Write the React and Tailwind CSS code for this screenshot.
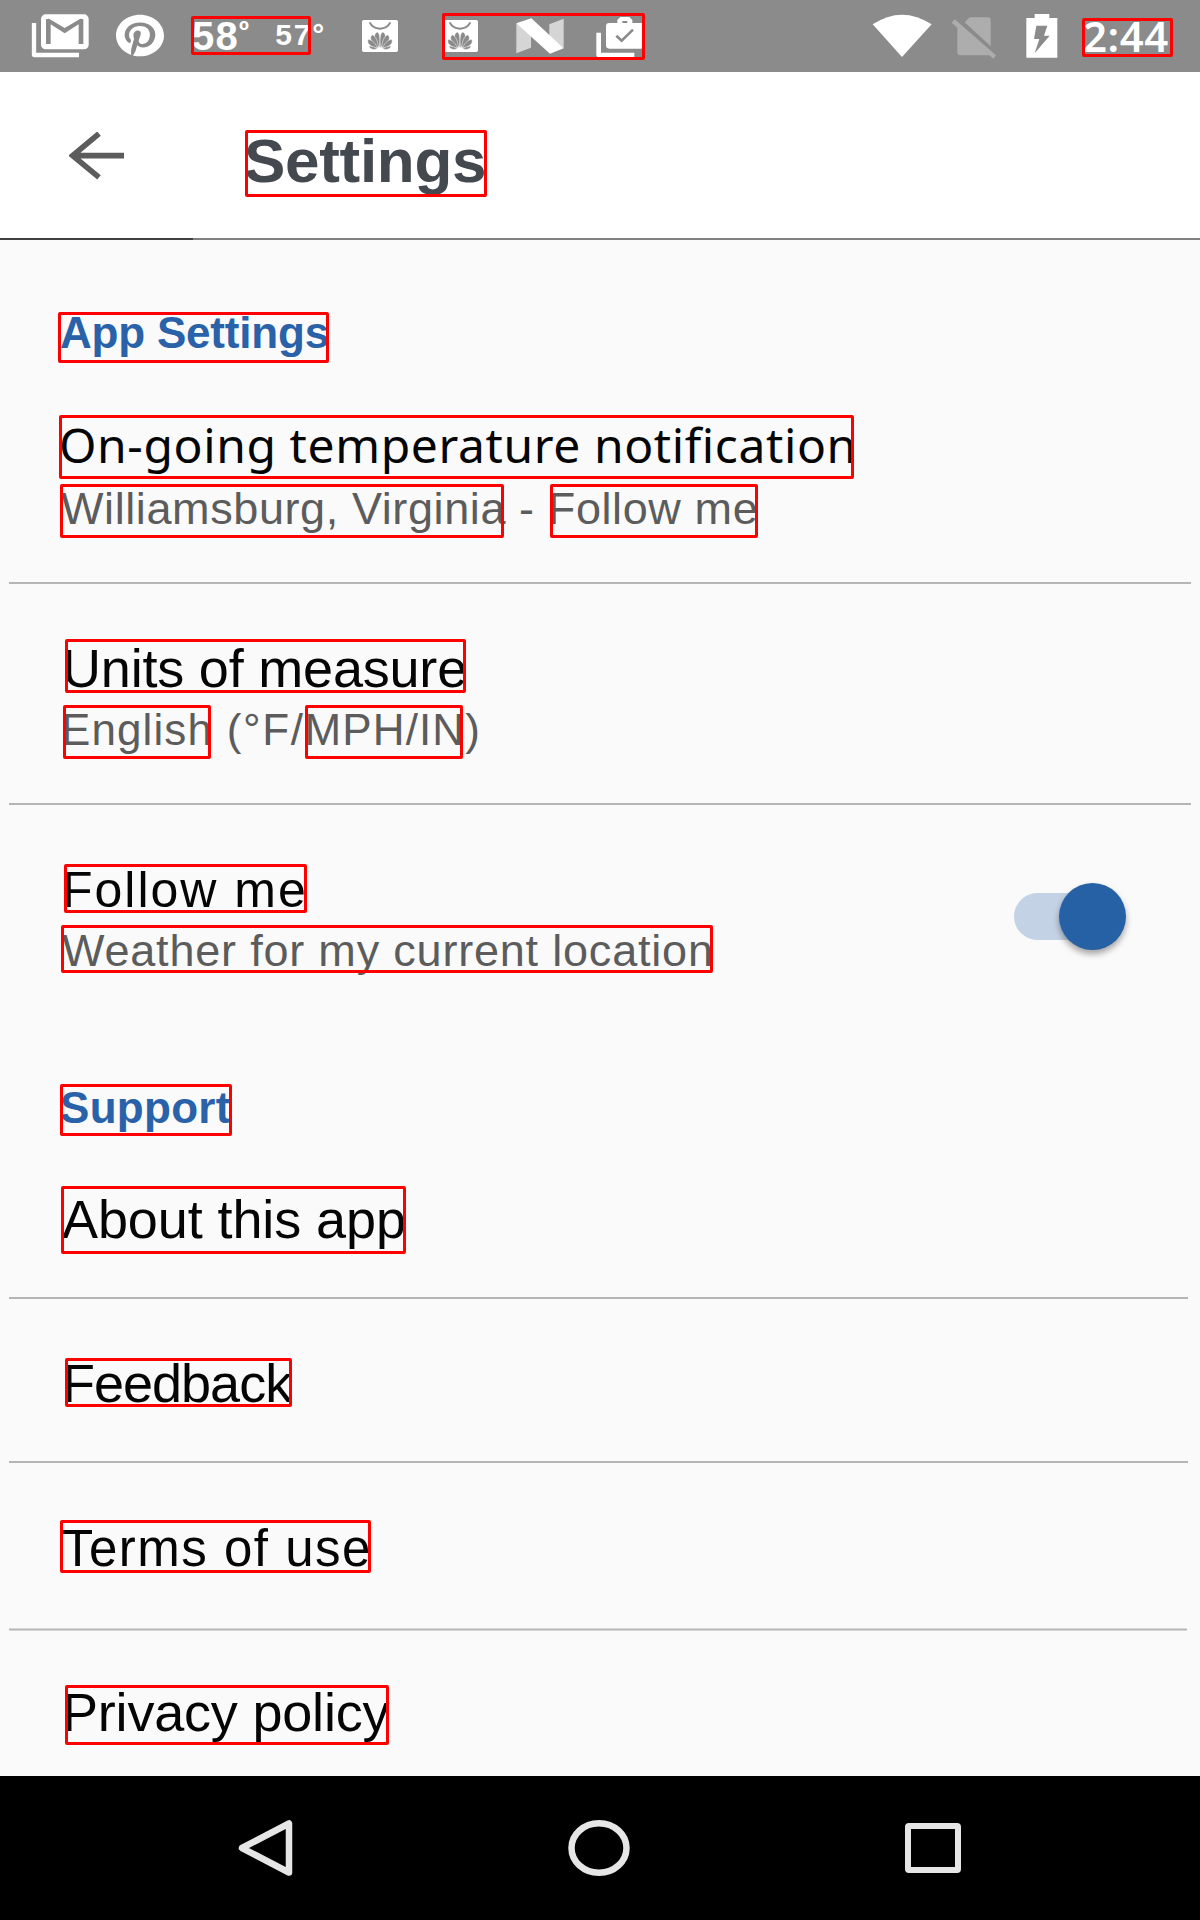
import React from "react";
import { FaPinterest } from "react-icons/fa";

/* Text run with a red outline lying over it */
function Mark({ box, children }) {
  return (
    <span className="relative inline-block">
      {children}
      <span className={`absolute rounded-[2px] border-[3px] border-[#fe0000] ${box}`} />
    </span>
  );
}

function Line({ className, children }) {
  return <p className={`w-fit whitespace-pre ${className}`}>{children}</p>;
}

function Divider({ className = "mr-[9px] h-[2px] bg-[#b5b5b5]" }) {
  return <div className={`ml-[9px] shrink-0 ${className}`} />;
}

function GmailIcon() {
  return (
    <svg className="ml-[31px] h-[44px] w-[58px] shrink-0" viewBox="93 42 174 132">
      <path d="M102 69V165H237" fill="none" stroke="#fff" strokeWidth="13" strokeLinejoin="round" />
      <rect x="123" y="43" width="143" height="105" rx="14" fill="#fff" />
      <path d="M138 58L147 56L194 84L241 56L250 58V132H236V73L194 100L152 73V132H138Z" fill="#8b8b8b" />
    </svg>
  );
}

function BagIcon({ className }) {
  return (
    <svg className={`h-[32px] w-[36px] shrink-0 ${className}`} viewBox="66 60 108 96">
      <rect x="66" y="60" width="108" height="96" rx="6" fill="#fff" />
      <path d="M89 67Q98 85 120 86Q142 85 151 67" fill="none" stroke="#8b8b8b" strokeWidth="6" />
      <g fill="#8b8b8b" stroke="#fff" strokeWidth="1.5">
        <path d="M119 144C103 128 97 101 112 96C122 101 120 124 119 144Z" />
        <path d="M121 144C137 128 143 101 128 96C118 101 120 124 121 144Z" />
        <path d="M116 144C95 133 86 114 96 104C109 108 113 126 116 144Z" />
        <path d="M124 144C145 133 154 114 144 104C131 108 127 126 124 144Z" />
        <path d="M113 145C91 141 80 131 84 118C99 120 107 131 113 145Z" />
        <path d="M127 145C149 141 160 131 156 118C141 120 133 131 127 145Z" />
        <path d="M112 146C103 150 90 149 86 138C97 139 105 141 112 146Z" />
        <path d="M128 146C137 150 150 149 154 138C143 139 135 141 128 146Z" />
      </g>
    </svg>
  );
}

function NougatIcon() {
  return (
    <svg className="ml-[38px] h-[36px] w-[48px] shrink-0" viewBox="528 54 144 108">
      <path d="M529 70L573 100V143L529 160Z" fill="#d5d5d5" />
      <path d="M628 73L671 56V145L628 110Z" fill="#d5d5d5" />
      <path d="M529 70L574 55L671 145L630 161Z" fill="#fff" />
    </svg>
  );
}

function BriefcaseIcon() {
  return (
    <svg className="ml-[32px] h-[42px] w-[49px] shrink-0" viewBox="768 48 147 126">
      <path d="M776 98V165H883" fill="none" stroke="#fff" strokeWidth="14" strokeLinejoin="round" />
      <rect x="798" y="69" width="114" height="77" rx="10" fill="#fff" />
      <path d="M832 70V60L841 51H868L877 60V70H862V63H847V70Z" fill="#fff" />
      <path d="M829 107L845 122L879 89" fill="none" stroke="#8b8b8b" strokeWidth="8" />
    </svg>
  );
}

function WifiIcon() {
  return (
    <svg className="ml-auto h-[44px] w-[60px] shrink-0" viewBox="66 42 180 132">
      <path d="M68 73Q156 15 245 73L156 171Z" fill="#fff" />
    </svg>
  );
}

function NoSimIcon() {
  return (
    <svg className="ml-[19px] h-[42px] w-[46px] shrink-0" viewBox="303 50 138 126">
      <g fill="#adadad">
        <path d="M344 66L359 51H414Q422 51 422 59V138Z" />
        <path d="M322 76L418 165H332Q322 165 322 155Z" />
        <path d="M305 67L314 57L438 165L430 175Z" />
      </g>
    </svg>
  );
}

function BatteryIcon() {
  return (
    <svg className="ml-[29px] h-[44px] w-[32px] shrink-0" viewBox="527 42 96 132">
      <path d="M528 54H553V42H597V54H621V173H528Z" fill="#fff" />
      <path d="M558 77H591L581 107H598L553 160L567 117H551Z" fill="#8b8b8b" />
    </svg>
  );
}

function StatusBar() {
  return (
    <div className="flex h-[72px] shrink-0 items-start bg-[#8b8b8b] pt-[14px] text-white">
      <GmailIcon />
      <FaPinterest className="ml-[27px] h-[43px] w-[48px] shrink-0" preserveAspectRatio="none" />
      <div className="relative ml-[28px] flex h-[40px] w-[134px] shrink-0 whitespace-pre font-bold">
        <span className="mt-[2px] text-[40px] leading-[40px] tracking-[1.3px]">58</span>
        <span className="mt-[4px] text-[27px] leading-[27px]">º</span>
        <span className="ml-auto mt-[6px] text-[30px] leading-[30px] tracking-[1.8px]">57°</span>
        <span className="absolute -left-px top-[2px] h-[39px] w-[120px] rounded-[2px] border-[3px] border-[#fe0000]" />
      </div>
      <BagIcon className="ml-[36px] mt-[6px]" />
      <div className="relative ml-[44px] flex w-[203px] shrink-0">
        <BagIcon className="mt-[6px]" />
        <div className="mt-[4px] flex">
          <NougatIcon />
        </div>
        <div className="mt-[2px] flex">
          <BriefcaseIcon />
        </div>
        <span className="absolute -top-px left-0 h-[47px] w-[203px] rounded-[2px] border-[3px] border-[#fe0000]" />
      </div>
      <WifiIcon />
      <div className="mt-[3px] flex">
        <NoSimIcon />
      </div>
      <BatteryIcon />
      <p className="ml-[25px] mr-[31px] mt-px font-['Noto_Sans',sans-serif] text-[42px] font-semibold leading-[42px] tracking-[0.6px]">
        <Mark box="-left-px top-[3px] h-[39px] w-[91px]">2:44</Mark>
      </p>
    </div>
  );
}

function Header() {
  return (
    <header className="flex h-[168px] shrink-0 flex-col bg-white">
      <div className="flex flex-1 items-start">
        <svg className="ml-[69px] mt-[60px] h-[48px] w-[56px] shrink-0" viewBox="207 96 168 144">
          <path d="M372 167H222M297 101L218 167L297 232" fill="none" stroke="#5c5c5c" strokeWidth="17" />
        </svg>
        <h1 className="ml-[119px] mt-[58px] text-[62px] font-bold leading-[62px] tracking-[-0.3px] text-[#444950]">
          <Mark box="left-px top-0 h-[67px] w-[242px]">Settings</Mark>
        </h1>
      </div>
      <div className="flex h-[2px] bg-[#808080]">
        <div className="w-[193px] bg-[#404040]" />
      </div>
    </header>
  );
}

function Toggle() {
  return (
    <div className="relative mr-[74px] mt-[18px] h-[67px] w-[112px]">
      <div className="absolute left-0 top-[10px] h-[47px] w-[99px] rounded-full bg-[#c4d2e5]" />
      <div className="absolute right-0 top-0 size-[67px] rounded-full bg-[#2660a5] shadow-[0_4px_6px_rgba(0,0,0,0.35)]" />
    </div>
  );
}

function NavBar() {
  return (
    <nav className="flex h-[144px] shrink-0 items-center bg-black">
      <svg className="ml-[236px] h-[60px] w-[60px]" viewBox="236 1818 60 60">
        <path d="M242 1848L289 1823.5V1872.5Z" fill="none" stroke="#e6e6e6" strokeWidth="6.5" strokeLinejoin="round" />
      </svg>
      <svg className="ml-[271px] h-[60px] w-[64px]" viewBox="567 1818 64 60">
        <ellipse cx="599" cy="1848" rx="27.5" ry="24.8" fill="none" stroke="#e6e6e6" strokeWidth="6.5" />
      </svg>
      <div className="ml-[274px] h-[50px] w-[56px] rounded-[4px] border-[6px] border-[#e6e6e6]" />
    </nav>
  );
}

export default function App() {
  return (
    <div className="flex h-[1920px] w-[1200px] flex-col overflow-hidden bg-[#fafafa] font-['Liberation_Sans',Arial,sans-serif] text-[#050505]">
      <StatusBar />
      <Header />

      <section className="h-[342px] shrink-0 pt-[71px]">
        <Line className="ml-[60px] text-[44px] font-bold leading-[44px] tracking-[-0.2px] text-[#2962a8]">
          <Mark box="-left-[2px] top-px h-[51px] w-[271px]">App Settings</Mark>
        </Line>
        <Line className="ml-[59px] mt-[65px] font-['Noto_Sans',sans-serif] text-[48px] leading-[50px] tracking-[0.6px]">
          <Mark box="left-0 -top-[5px] h-[64px] w-[795px]">On-going temperature notification</Mark>
        </Line>
        <Line className="ml-[61px] mt-[16px] text-[45px] leading-[46px] tracking-[0.6px] text-[#5c5c5c]">
          <Mark box="-left-px -top-[2px] h-[54px] w-[444px]">Williamsburg, Virginia</Mark>
          {" - "}
          <Mark box="left-[2px] -top-[2px] h-[54px] w-[208px]">Follow me</Mark>
        </Line>
      </section>
      <Divider />

      <section className="h-[219px] shrink-0 pt-[57px]">
        <Line className="ml-[62px] text-[54px] leading-[54px] tracking-[-0.2px]">
          <Mark box="left-[3px] -top-[2px] h-[54px] w-[401px]">Units of measure</Mark>
        </Line>
        <Line className="ml-[61px] mt-[13px] text-[44px] leading-[44px] tracking-[1.1px] text-[#5c5c5c]">
          <Mark box="left-[2px] -top-[3px] h-[54px] w-[148px]">English</Mark>
          <span className="tracking-[1.6px]">{" (°F/"}</span>
          <Mark box="left-0 -top-[3px] h-[54px] w-[158px]">MPH/IN</Mark>
          {")"}
        </Line>
      </section>
      <Divider />

      <section className="h-[492px] shrink-0 pt-[60px]">
        <div className="flex h-[108px] items-start justify-between">
          <div>
            <Line className="ml-[62px] text-[50px] leading-[50px] tracking-[2px]">
              <Mark box="left-[2px] -top-px h-[49px] w-[243px]">Follow me</Mark>
            </Line>
            <Line className="ml-[62px] mt-[13px] text-[45px] leading-[46px] tracking-[0.8px] text-[#5c5c5c]">
              <Mark box="-left-px -top-[3px] h-[48px] w-[652px]">Weather for my current location</Mark>
            </Line>
          </div>
          <Toggle />
        </div>
        <Line className="ml-[60px] mt-[113px] text-[44px] font-bold leading-[44px] tracking-[0.3px] text-[#2962a8]">
          <Mark box="left-0 -top-[2px] h-[52px] w-[172px]">Support</Mark>
        </Line>
        <Line className="ml-[62px] mt-[62px] text-[54px] leading-[54px] tracking-[-0.1px]">
          <Mark box="-left-px -top-[6px] h-[68px] w-[345px]">About this app</Mark>
        </Line>
      </section>
      <Divider className="mr-[12px] h-[2px] bg-[#b5b5b5]" />

      <section className="h-[162px] shrink-0 pt-[57px]">
        <Line className="ml-[62px] text-[54px] leading-[54px] tracking-[-1px]">
          <Mark box="left-[3px] top-[2px] h-[49px] w-[227px]">Feedback</Mark>
        </Line>
      </section>
      <Divider className="mr-[12px] h-[2px] bg-[#b5b5b5]" />

      <section className="h-[165px] shrink-0 pt-[60px]">
        <Line className="ml-[62px] text-[51px] leading-[52px] tracking-[1.5px]">
          <Mark box="-left-[2px] -top-[3px] h-[53px] w-[311px]">Terms of use</Mark>
        </Line>
      </section>
      <Divider className="mr-[13px] h-[3px] border-y border-[#d8d8d8] bg-[#b5b5b5]" />

      <section className="h-[145px] shrink-0 pt-[54px]">
        <Line className="ml-[62px] text-[54px] leading-[54px] tracking-[-0.2px]">
          <Mark box="left-[3px] top-0 h-[60px] w-[324px]">Privacy policy</Mark>
        </Line>
      </section>

      <NavBar />
    </div>
  );
}
